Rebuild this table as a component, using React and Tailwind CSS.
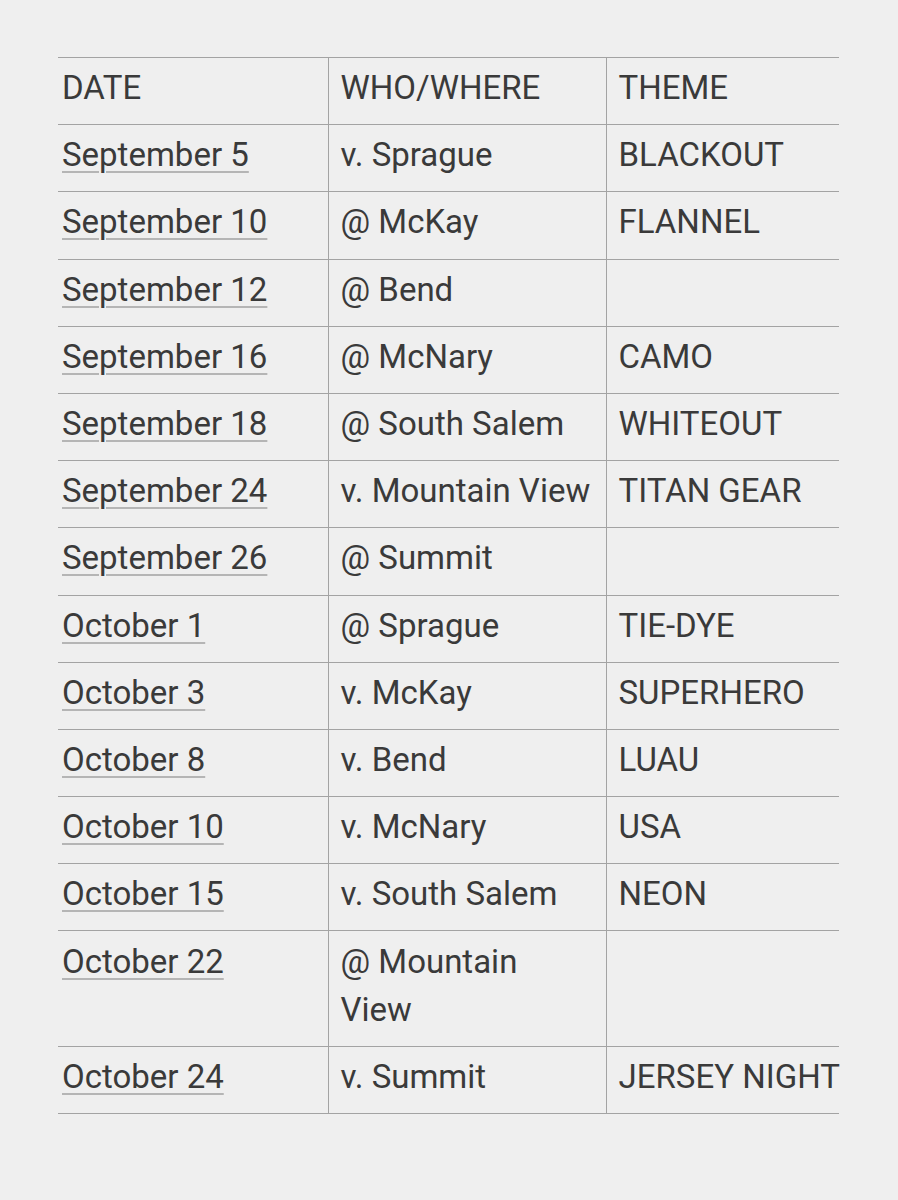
const rows = [
  ["September 5", "v. Sprague", "BLACKOUT"],
  ["September 10", "@ McKay", "FLANNEL"],
  ["September 12", "@ Bend", ""],
  ["September 16", "@ McNary", "CAMO"],
  ["September 18", "@ South Salem", "WHITEOUT"],
  ["September 24", "v. Mountain View", "TITAN GEAR"],
  ["September 26", "@ Summit", ""],
  ["October 1", "@ Sprague", "TIE-DYE"],
  ["October 3", "v. McKay", "SUPERHERO"],
  ["October 8", "v. Bend", "LUAU"],
  ["October 10", "v. McNary", "USA"],
  ["October 15", "v. South Salem", "NEON"],
  ["October 22", "@ Mountain View", ""],
  ["October 24", "v. Summit", "JERSEY NIGHT"],
]

const cell = "align-top pt-[6.1px] pb-[12.1px] leading-[48px] border-b border-[#a3a3a3]"

const App = () => {
  return (
    <div className="w-[898px] h-[1200px] bg-[#efefef] pt-[57px] pl-[58px] overflow-hidden">
      <table
        className="w-[781px] table-fixed border-collapse text-[33px] text-[#3a3a3a]"
        style={{ fontFamily: 'Roboto, "Liberation Sans", Arial, sans-serif' }}
      >
        <colgroup>
          <col className="w-[270px]" />
          <col className="w-[278px]" />
          <col className="w-[233px]" />
        </colgroup>
        <thead>
          <tr className="border-t border-[#a3a3a3]">
            <td className={`${cell} pl-[4px] border-r`}>DATE</td>
            <td className={`${cell} pl-[12px] border-r`}>WHO/WHERE</td>
            <td className={`${cell} pl-[12px] whitespace-nowrap`}>THEME</td>
          </tr>
        </thead>
        <tbody>
          {rows.map(([date, where, theme]) => (
            <tr key={date}>
              <td className={`${cell} pl-[4px] border-r`}>
                <span className="underline decoration-[#b5b5b5] decoration-2 underline-offset-[5px]">
                  {date}
                </span>
              </td>
              <td className={`${cell} pl-[12px] pr-[12px] border-r`}>{where}</td>
              <td className={`${cell} pl-[12px] whitespace-nowrap`}>{theme}</td>
            </tr>
          ))}
        </tbody>
      </table>
    </div>
  )
}

export default App
